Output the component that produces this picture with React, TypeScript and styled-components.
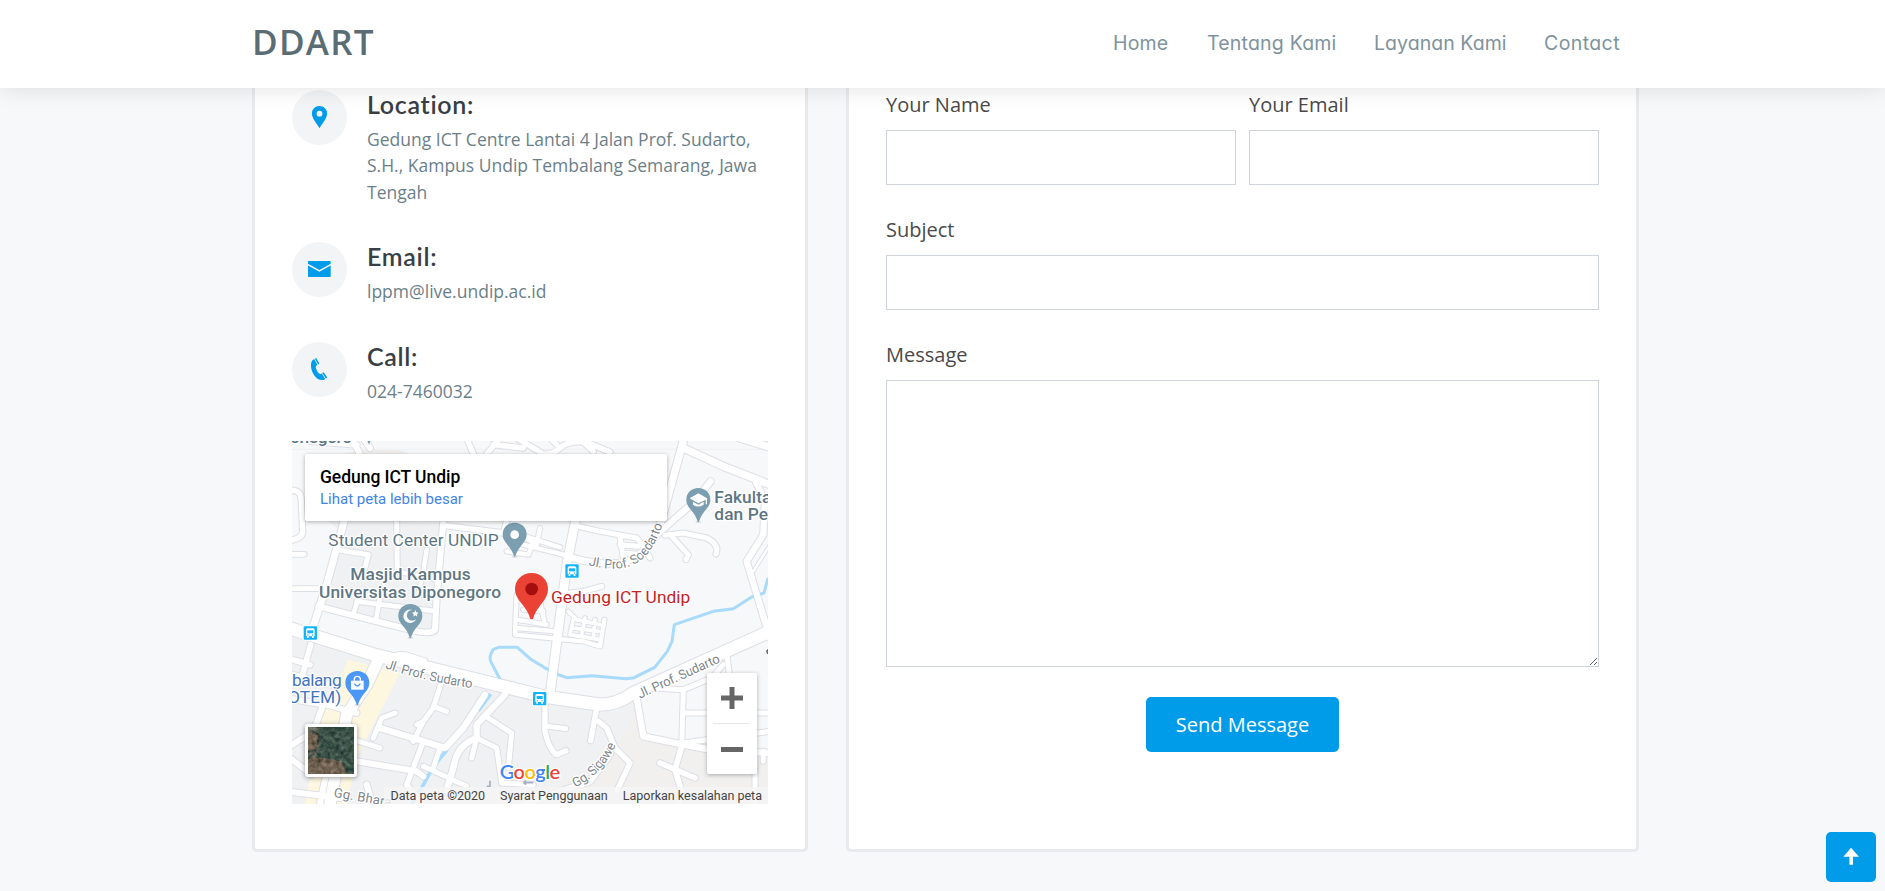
import React from "react";
import styled, { createGlobalStyle } from "styled-components";

const GlobalStyle = createGlobalStyle`
  *, *::before, *::after { box-sizing: border-box; }
  body {
    margin: 0;
    background: #f6f8fa;
    color: #444;
    font-family: "Open Sans", "Liberation Sans", sans-serif;
    overflow: hidden;
  }
`;

const Page = styled.div`
  height: 891px;
  display: flex;
  flex-direction: column;
  overflow: hidden;
`;

const Header = styled.header`
  position: relative;
  z-index: 2;
  flex: none;
  height: 88px;
  padding: 0 265px 0 252px;
  display: flex;
  align-items: center;
  justify-content: space-between;
  background: #fff;
  box-shadow: 0 0 22px rgba(0, 0, 0, 0.12);
`;

const Logo = styled.h1`
  margin: 0;
  padding-bottom: 5px;
  font-size: 35px;
  line-height: 48px;
  font-weight: 600;
  letter-spacing: 1.25px;
  color: #5a6c74;
`;

const Nav = styled.nav`
  display: flex;
  gap: 38px;
  padding-bottom: 3px;
`;

const NavLink = styled.a<{ $w: number; $ls: number }>`
  width: ${(p) => p.$w}px;
  white-space: nowrap;
  font-family: Inter, sans-serif;
  font-feature-settings: "cv11";
  font-size: 19.5px;
  line-height: 28px;
  letter-spacing: ${(p) => p.$ls}px;
  color: #7e939c;
`;

const Columns = styled.main`
  display: flex;
  gap: 38px;
  padding-left: 252px;
`;

const Card = styled.section<{ $width: number }>`
  width: ${(p) => p.$width}px;
  height: 764px;
  padding: 2px 37px 0;
  background: #fff;
  border: solid #e8ebee;
  border-width: 0 3px 3px;
  border-radius: 0 0 5px 5px;
`;

const Info = styled.div`
  display: flex;
  gap: 20px;
  margin-bottom: 37.2px;
`;

const IconDisc = styled.div`
  flex: none;
  width: 55px;
  height: 55px;
  border-radius: 50%;
  background: #f2f4f6;
`;

const InfoTitle = styled.h4`
  margin: 0 0 8.2px;
  font-family: Lato, sans-serif;
  font-size: 25px;
  line-height: 28px;
  font-weight: 600;
  letter-spacing: 0.7px;
  font-variant-ligatures: none;
  color: #384046;
`;

const InfoText = styled.p`
  margin: 0;
  font-size: 17.5px;
  line-height: 26.2px;
  color: #6b7f89;
  white-space: nowrap;
`;

const Form = styled.form`
  display: flex;
  flex-direction: column;
`;

const FieldRow = styled.div`
  display: grid;
  grid-template-columns: 1fr 1fr;
  gap: 13px;
`;

const Field = styled.label`
  display: block;
  margin-bottom: 30px;
  font-size: 20px;
  line-height: 30px;
  color: #4a4a4a;
`;

const Input = styled.input`
  display: block;
  width: 100%;
  height: 55px;
  margin-top: 10px;
  border: 1px solid #ced4da;
  background: #fff;
`;

const TextArea = styled.textarea`
  display: block;
  width: 100%;
  height: 287px;
  margin-top: 10px;
  border: 1px solid #ced4da;
  background: #fff;
  resize: vertical;
`;

const SendButton = styled.button`
  align-self: center;
  width: 193px;
  height: 55px;
  padding: 0 0 1px;
  border: 0;
  border-radius: 5px;
  background: #009cea;
  color: #fff;
  font-family: inherit;
  font-size: 20px;
`;

const BackToTop = styled.a`
  position: fixed;
  right: 9px;
  bottom: 9px;
  width: 50px;
  height: 50px;
  border-radius: 5px;
  background: #009cea;
`;

const MapFrame = styled.div`
  position: relative;
  width: 476px;
  height: 363px;
  overflow: hidden;
  font-family: Roboto, sans-serif;
`;

const MapDrawing = styled.svg`
  display: block;
  width: 476px;
  height: 363px;
  font-family: Roboto, sans-serif;
`;

const PlaceCard = styled.div`
  position: absolute;
  left: 13px;
  top: 13px;
  width: 362px;
  height: 67px;
  padding: 12px 15px;
  border-radius: 2px;
  background: #fff;
  box-shadow: 0 1px 4px rgba(0, 0, 0, 0.3);
`;

const PlaceName = styled.div`
  font-size: 17.5px;
  line-height: 22px;
  font-weight: 500;
  letter-spacing: -0.05px;
  color: #000;
`;

const PlaceLink = styled.a`
  display: block;
  font-size: 15px;
  line-height: 22px;
  color: #4285e4;
`;

const Thumb = styled.div`
  position: absolute;
  left: 13px;
  top: 283px;
  width: 52px;
  height: 53px;
  padding: 3px;
  border-radius: 3px;
  background: #fff;
  box-shadow: 0 1px 5px rgba(0, 0, 0, 0.4);
  svg { display: block; }
`;

const ZoomControl = styled.div`
  position: absolute;
  left: 415px;
  top: 232px;
  width: 50px;
  height: 101px;
  border-radius: 2px;
  background: #fff;
  box-shadow: 0 1px 4px rgba(0, 0, 0, 0.3);
  svg { display: block; }
`;

const Attribution = styled.div`
  position: absolute;
  right: 0;
  bottom: 0;
  height: 17px;
  display: flex;
  align-items: center;
  gap: 15px;
  padding: 0 6px 0 7px;
  background: rgba(245, 245, 245, 0.8);
  font-size: 12.5px;
  line-height: 17px;
  color: #444;
  white-space: nowrap;
`;

type Road = [string, number];

const roads: Road[] = [
  // upper left blocks
  ["M-10 155 L15 158 Q35 162 34 190 L38 280 Q38 305 -10 308", 16],
  ["M-10 349 H43", 14],
  ["M-10 452 H100", 14],
  ["M165 240 L110 440 L62 590", 21],
  ["M140 335 L235 350 L222 400", 15],
  ["M190 9 L215 60 M60 9 L200 20 M225 9 L240 30", 18],
  ["M320 250 L322 400", 15],
  ["M460 250 L440 480 L435 575 Q425 590 370 578 L260 550 L85 505", 18],
  ["M460 262 L640 285 L650 250", 16],
  ["M410 335 L400 400 L385 470 M320 400 L440 425", 13],
  ["M205 480 L190 530 M270 480 L258 545 M200 490 L440 520", 14],
  // top strip
  ["M530 0 L550 48 M630 0 L590 48 M610 20 L700 30", 16],
  ["M680 0 L760 48 Q790 50 810 30 Q830 10 880 12 L910 40 M860 0 L960 42 M780 0 L800 20", 16],
  ["M1180 9 L1130 190 L1110 260", 22],
  ["M1180 30 L1300 85 L1440 140 M1350 0 L1440 28", 22],
  ["M1395 125 L1425 190 L1420 290 L1370 370 L1440 600", 19],
  ["M1440 320 L1390 400", 7],
  // campus streets
  ["M1262 130 L1210 195 L1145 250 L1100 290 Q1060 350 1010 370 Q950 385 880 368 L830 355", 19],
  ["M1125 292 L1180 285 L1250 300 Q1290 320 1278 348 M1145 295 L1195 350 L1188 365", 15],
  ["M850 262 L930 280 L1040 300 Q1060 320 1080 360 M990 295 L1000 360 M990 320 L1045 325 M1000 345 L1060 350", 15],
  ["M650 340 L715 350 L730 315 L690 290 L810 328 M750 270 L740 320 M680 315 L820 350", 13],
  ["M858 240 L832 370 L815 500 L780 770", 26],
  ["M765 780 L765 880 Q775 930 798 950 L828 938", 16],
  ["M680 470 L675 590 L880 610 L930 625 L943 545 M680 545 L770 560 M700 515 L760 520 M680 570 L800 580 M750 490 L765 560", 13],
  ["M840 465 L880 460 L935 445", 15],
  ["M835 520 L860 545 L930 560 M850 570 L925 580 M840 590 L930 605 M885 540 L875 590 M915 545 L910 600 M850 545 L840 590", 11],
  // Jalan Prof. Sudarto, western and eastern arms
  ["M-10 568 L260 652 L600 735 L760 775 L930 800 Q980 800 1030 765 L1440 580", 37],
  ["M310 660 Q315 645 350 650 L405 668", 13],
  // south west blocks
  ["M62 620 L35 720 M-10 660 L60 680 M-10 705 L120 740", 17],
  ["M268 660 L230 740 L170 830 L120 1098", 34],
  ["M-10 930 L70 880 L100 800 L-10 780", 18],
  ["M200 825 L110 800", 17],
  ["M455 730 L430 810 L400 850 L380 860 M430 805 L470 820 M400 850 L370 910", 15],
  ["M585 770 L520 870 L465 930 L400 910 L270 870", 19],
  ["M315 825 L275 840 L250 900 M190 905 L270 930", 15],
  ["M400 910 L385 950 L350 1040 L400 1098", 16],
  ["M200 970 L380 1000 L400 1015", 18],
  ["M645 770 L560 860 L560 900 Q500 920 490 990 L470 1055", 19],
  ["M595 840 L665 885 L655 990 M560 900 L545 960 M570 905 L620 930 L635 1035 L730 1040", 15],
  ["M400 985 L530 1045 M450 930 L430 990", 15],
  ["M-10 1060 L150 1080 M230 1040 L245 1090 M110 1000 L90 1098 M0 960 L65 1010", 18],
  // south centre
  ["M775 865 L828 872", 14],
  ["M920 810 L902 908 M925 850 L950 870 L975 930 L1020 975 L980 1060", 16],
  ["M960 950 L900 1030 L700 1098", 18],
  // south east blocks
  ["M1040 780 L1060 895 L1180 920 L1260 935 L1440 945", 19],
  ["M1090 750 L1180 755 L1265 720 L1300 680", 15],
  ["M1180 755 L1175 930 M1180 825 H1440 M1180 915 L1440 880", 15],
  ["M1175 925 L1155 995 L1175 1060 L1165 1098 M1110 975 L1215 1020", 17],
  ["M1395 940 V1098 M1420 940 V970 M1310 650 L1320 720", 15],
];

const halo = {
  stroke: "#fff",
  strokeWidth: 8,
  strokeLinejoin: "round" as const,
  paintOrder: "stroke",
};

function Pin({ x, y, color, children }: { x: number; y: number; color: string; children?: React.ReactNode }) {
  return (
    <g transform={`translate(${x} ${y})`}>
      <ellipse cx="0" cy="66" rx="9" ry="4" fill="#dfe2e4" />
      <path
        d="M0-36C-21-36-36-21-36-1C-36 16-26 24-17 36C-8 48-5 56-1.5 66H1.5C5 56 8 48 17 36C26 24 36 16 36-1C36-21 21-36 0-36Z"
        fill={color}
      />
      {children}
    </g>
  );
}

function BusStop({ x, y }: { x: number; y: number }) {
  return (
    <g transform={`translate(${x} ${y})`}>
      <rect x="-23" y="-23" width="46" height="46" rx="5" fill="#fff" />
      <rect x="-20" y="-20" width="40" height="40" rx="3" fill="#12b5fb" />
      <path d="M-13-9Q-13-14-8-14H8Q13-14 13-9V10H10V15H5V10H-5V15H-10V10H-13Z" fill="#fff" />
      <path d="M-9-8H9V1H-9Z" fill="#12b5fb" />
      <circle cx="-7" cy="6" r="2" fill="#12b5fb" />
      <circle cx="7" cy="6" r="2" fill="#12b5fb" />
    </g>
  );
}

function MapCanvas() {
  return (
    <MapDrawing viewBox="6 9 1428 1089">
      <rect x="0" y="0" width="1440" height="1104" fill="#f7f8fa" />
      <g fill="#f0f1f3">
        <path d="M105 240L460 255L440 590L85 505L150 280Z" />
        <path d="M0 590L260 660L760 785L950 810L1040 780V1104H0Z" />
        <path d="M160 48L230 35Q330 25 355 48Z" fill="#f0efee" />
      </g>
      <path d="M1030 800L1050 890L1440 940V1104H700L960 950L1015 870Z" fill="#f1f0ef" />
      <g fill="#fef7e0">
        <path d="M175 665L330 705L250 860L200 960L170 1098H45L90 850Z" />
      </g>
      <path d="M0 34H1434M0 995H1434" stroke="#eff0f2" strokeWidth="3" />
      <g fill="none" strokeLinecap="round" strokeLinejoin="round">
        {roads.map(([d, w], i) => (
          <path key={i} d={d} strokeWidth={w + 6} stroke="#dddfe5" />
        ))}
      </g>
      <g fill="none" stroke="#a8dafb" strokeWidth="9" strokeLinejoin="round">
        <path d="M632 728L628 720L602 670Q596 655 610 634L626 628H682L720 662L762 688L800 708L830 719L905 713L1008 722L1032 719L1094 688L1132 640L1146 610L1153 560L1270 520L1330 512L1385 477L1422 465L1434 420" />
        <path d="M602 768L565 818M472 935L430 985L395 1050L365 1098" strokeWidth="11" />
      </g>
      <g fill="none" strokeLinecap="round" strokeLinejoin="round">
        {roads.map(([d, w], i) => (
          <path key={i} d={d} strokeWidth={w} stroke="#fff" />
        ))}
      </g>
      <path d="M600 1028V1045H590M700 1034H730M700 1034L708 1028M700 1034L708 1040" fill="none" stroke="#a9afc4" strokeWidth="5" />

      <defs>
        <path id="soedarto" d="M895 382C1010 408 1078 390 1122 245" />
        <path id="sudartoWest" d="M285 690Q400 730 560 752" />
        <path id="sudartoEast" d="M1050 782L1300 668" />
        <path id="sigawe" d="M855 1048Q940 1010 985 905" />
      </defs>
      <g fill="#7d858b" fontSize="39" {...halo}>
        <text><textPath href="#soedarto" textLength="290">Jl. Prof. Soedarto</textPath></text>
        <text><textPath href="#sudartoWest" textLength="268">Jl. Prof. Sudarto</textPath></text>
        <text><textPath href="#sudartoEast" textLength="266">Jl. Prof. Sudarto</textPath></text>
        <text><textPath href="#sigawe" textLength="180">Gg. Sigawe</textPath></text>
        <text transform="translate(130 1076) rotate(10)" textLength="175">Gg. Bhara</text>
      </g>

      <g fill="#5e7683" fontSize="52" {...halo}>
        <text x="0" y="16" fontWeight="500" textLength="186">onegoro</text>
        <text x="115" y="325" textLength="511">Student Center UNDIP</text>
        <text x="181" y="427" fontWeight="500" textLength="361">Masjid Kampus</text>
        <text x="87" y="479" fontWeight="500" textLength="546">Universitas Diponegoro</text>
        <text x="1273" y="195" fontWeight="500" textLength="198">Fakultas</text>
        <text x="1273" y="247" fontWeight="500" textLength="190">dan Pen</text>
      </g>
      <g fill="#4274bd" fontSize="52" {...halo}>
        <text x="6" y="744" textLength="149">balang</text>
        <text x="-6" y="796" textLength="160">OTEM)</text>
      </g>
      <path d="M232 9H241L237 20Z" fill="#7b9eb0" />

      <Pin x={674} y={290} color="#7b9eb0">
        <circle r="13" fill="#fff" />
      </Pin>
      <Pin x={361} y={534} color="#7b9eb0">
        <path d="M6-18A20 20 0 1 0 18 8A16 16 0 1 1 6-18Z" fill="#fff" />
        <path d="M15-18L18-11L25-10L20-5L21 2L15-2L9 2L10-5L5-10L12-11Z" fill="#fff" />
      </Pin>
      <Pin x={1225} y={186} color="#7b9eb0">
        <path d="M-26-5L0-20L26-5V13H22V-1L0 10Z" fill="#fff" />
        <path d="M-16 5L0 14L16 5V14Q0 25-16 14Z" fill="#fff" />
      </Pin>
      <Pin x={202} y={735} color="#4c97f6">
        <path d="M-19-7H19V20H-19Z" fill="#fff" />
        <path d="M-9-7V-13Q-8-20 0-20Q8-20 9-13V-7" fill="none" stroke="#fff" strokeWidth="4" />
        <path d="M-9 2Q0 16 9 2" fill="none" stroke="#4c97f6" strokeWidth="4" />
      </Pin>

      <BusStop x={846} y={399} />
      <BusStop x={61} y={585} />
      <BusStop x={749} y={782} />

      <path d="M725 405C696 405 675 426 675 453C675 475 688 487 699 502C711 518 717 529 721 543H729C733 529 739 518 751 502C762 487 774 475 774 453C774 426 754 405 725 405Z" fill="#ea4335" />
      <circle cx="725" cy="453" r="19" fill="#a50e0e" />
      <text x="783" y="496" fontSize="52" fill="#c5221f" textLength="418" {...halo}>Gedung ICT Undip</text>

      <path d="M1434 635Q1428 640 1434 647" stroke="#666" strokeWidth="5" fill="none" />

      <text x="629" y="1023" fontFamily="Lato, sans-serif" fontSize="60" fontWeight="600" textLength="181" {...halo}>
        <tspan fill="#4285f4">G</tspan>
        <tspan fill="#ea4335">o</tspan>
        <tspan fill="#fbbc05">o</tspan>
        <tspan fill="#4285f4">g</tspan>
        <tspan fill="#34a853">l</tspan>
        <tspan fill="#ea4335">e</tspan>
      </text>
    </MapDrawing>
  );
}

function SatelliteTile() {
  return (
    <svg width="46" height="47">
      <filter id="terrain" x="0" y="0" width="1" height="1" colorInterpolationFilters="sRGB">
        <feTurbulence type="fractalNoise" baseFrequency="0.22" numOctaves={4} seed={8} />
        <feColorMatrix values="0.6 0.3 0 0 -0.14  0.5 0.3 0 0 -0.06  0.5 0.2 0 0 -0.05  0 0 0 0 1" />
      </filter>
      <rect width="46" height="47" filter="url(#terrain)" />
      <path d="M0 32Q20 29 34 36L40 47H0ZM0 5L10 8L8 22L0 24Z" fill="#a07058" opacity="0.4" />
      <path d="M12 0H46V47H38L34 34L10 30Z" fill="#1e4a40" opacity="0.4" />
    </svg>
  );
}

const Contacts = [
  {
    title: "Location:",
    lines: [
      "Gedung ICT Centre Lantai 4 Jalan Prof. Sudarto,",
      "S.H., Kampus Undip Tembalang Semarang, Jawa",
      "Tengah",
    ],
    icon: (
      <path
        fillRule="evenodd"
        d="M27.5 16C23.2 16 19.9 19.3 19.9 23.5C19.9 28.7 25 33.6 27.5 38.2C30 33.6 35.1 28.7 35.1 23.5C35.1 19.3 31.8 16 27.5 16ZM27.5 20.8A2.9 2.9 0 1 1 27.5 26.6A2.9 2.9 0 1 1 27.5 20.8Z"
      />
    ),
  },
  {
    title: "Email:",
    lines: ["lppm@live.undip.ac.id"],
    icon: <path d="M16.7 19H38Q38.7 19 38.7 19.7V21.8L27.4 28L16 21.8V19.7Q16 19 16.7 19ZM16 23.4L27.4 29.8L38.7 23.4V34.3Q38.7 35 38 35H16.7Q16 35 16 34.3Z" />,
  },
  {
    title: "Call:",
    lines: ["024-7460032"],
    icon: (
      <path d="M20.2 18.4L22.2 17.1L25.5 22.9L23.7 24C23.6 27 25.4 30.7 28.2 32.2L29.7 31.4L33.2 36.9L31.4 37.9C28.6 38.7 25 37.3 22.2 33.2C19.2 28.7 17.8 22.4 20.2 18.4ZM22.9 16.7L24.2 16.1L27.3 21.6L26.1 22.4ZM30.2 31L31.6 30.2L35.3 35.5L33.9 36.5Z" />
    ),
  },
];

export default function App() {
  return (
    <>
      <GlobalStyle />
      <Page>
        <Header>
          <Logo>DDART</Logo>
          <Nav>
            <NavLink $w={56} $ls={0.2}>Home</NavLink>
            <NavLink $w={129} $ls={0.2}>Tentang Kami</NavLink>
            <NavLink $w={132} $ls={0.05}>Layanan Kami</NavLink>
            <NavLink $w={76} $ls={0.4}>Contact</NavLink>
          </Nav>
        </Header>
        <Columns>
          <Card $width={556}>
            {Contacts.map((c) => (
              <Info key={c.title}>
                <IconDisc>
                  <svg width="55" height="55" fill="#009cea">{c.icon}</svg>
                </IconDisc>
                <div>
                  <InfoTitle>{c.title}</InfoTitle>
                  {c.lines.map((l) => (
                    <InfoText key={l}>{l}</InfoText>
                  ))}
                </div>
              </Info>
            ))}
            <MapFrame>
              <MapCanvas />
              <PlaceCard>
                <PlaceName>Gedung ICT Undip</PlaceName>
                <PlaceLink>Lihat peta lebih besar</PlaceLink>
              </PlaceCard>
              <Thumb>
                <SatelliteTile />
              </Thumb>
              <ZoomControl>
                <svg width="50" height="101">
                  <path d="M14 25H36M25 14V36M14 76.5H36" stroke="#666" strokeWidth="5" />
                  <path d="M6 50.5H43" stroke="#e6e6e6" />
                </svg>
              </ZoomControl>
              <Attribution>
                <span>Data peta ©2020</span>
                <span>Syarat Penggunaan</span>
                <span>Laporkan kesalahan peta</span>
              </Attribution>
            </MapFrame>
          </Card>
          <Card $width={793}>
            <Form>
              <FieldRow>
                <Field>
                  Your Name
                  <Input />
                </Field>
                <Field>
                  Your Email
                  <Input />
                </Field>
              </FieldRow>
              <Field>
                Subject
                <Input />
              </Field>
              <Field>
                Message
                <TextArea />
              </Field>
              <SendButton type="button">Send Message</SendButton>
            </Form>
          </Card>
        </Columns>
      </Page>
      <BackToTop>
        <svg width="50" height="50" fill="#fff">
          <path d="M25 15.7L33 24.7H27V32.8H23.4V24.7H17.4Z" />
        </svg>
      </BackToTop>
    </>
  );
}
